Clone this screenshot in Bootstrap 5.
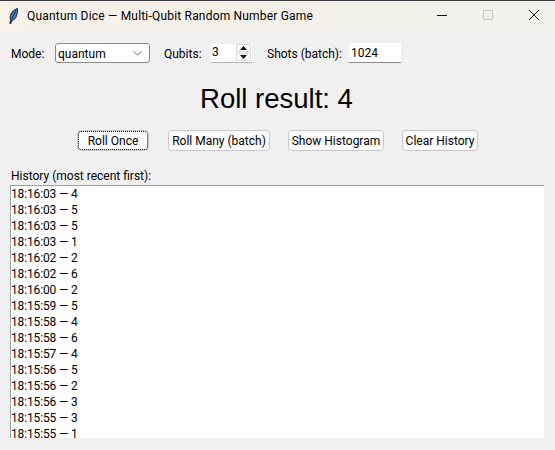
<!DOCTYPE html>
<html lang="en">
<head>
<meta charset="utf-8">
<title>Quantum Dice</title>
<link rel="stylesheet" href="https://cdn.jsdelivr.net/npm/bootstrap@5.3.0/dist/css/bootstrap.min.css">
<style>
html,body{height:450px;overflow:hidden}
body{width:555px;background:#f0f0f0;font-family:Roboto,"Noto Sans",sans-serif;font-size:12px;color:#000;line-height:16px}
.winbar{height:31px;background:linear-gradient(90deg,#f7f1e8,#f3f1ea 60%,#eff2ec);border-top:1px solid #3a3a3a;padding-left:9px}
.winbar-title{margin-left:9px;white-space:nowrap;letter-spacing:.19px}
.winbtn{width:46px;height:30px;padding-bottom:2px}
.winbtns{margin-right:-2px}
.ctl-row{height:20px;margin:12px 0 0 11px}
.lbl-mode{width:44px;padding-top:1px}
.lbl-qub{width:47px;padding-top:1px}
.lbl-shot{width:82px;padding-top:1px}
.sel-box{width:95px;height:20px;margin-right:14px;background:#fff;border:1px solid #8a8a8a;border-radius:3px;padding:1px 7px 0 2px}
.spin-box{width:41px;height:19px;margin-right:15px;background:#fff;border-bottom:1px solid #b5b5b5;padding-left:1px}
.spin-arrows{width:15px;height:17px;gap:1px;margin-right:1px}
.spin-arrows span{height:8px;background:#fbfbfb;border:1px solid #d4d4d4;border-radius:1px}
.ent-box{width:52px;height:20px;background:#fff;border-bottom:1px solid #8a8a8a;padding-left:2px;line-height:21px}
.result-txt{font-family:"Liberation Sans",Arial,sans-serif;font-size:27.5px;line-height:34px;margin:19px 0 0;font-weight:400;text-align:center;padding-right:2px}
.act-row{margin:14px 0 0 77px;height:21px}
.act{height:21px;font-size:12px;line-height:15px;padding:1px 0 0;background:#fdfdfd;border:1px solid #c8c8c8;border-radius:4px;color:#000;white-space:nowrap}
.act:hover{background:#fdfdfd;border-color:#c8c8c8;color:#000}
.act-a{width:72px;margin-right:19px;outline:1px dotted #000;outline-offset:-2px}
.act-b{width:102px;margin-right:18px}
.act-c{width:96px;margin-right:18px}
.act-d{width:76px}
.hist-label{margin:17px 0 0 11px;height:17px}
.hist-box{width:534px;height:253px;margin-left:10px;background:#fff;border-top:1px solid #a0a0a0;border-left:1px solid #a0a0a0;overflow:hidden}
.hist-box div{height:16px;line-height:16px;letter-spacing:-.15px}
</style>
</head>
<body>
<div class="winbar d-flex align-items-center">
  <svg width="9" height="16" viewBox="0 0 9 16"><path d="M8.500.500C5 1.500 2.500 4 1.500 7.500c-.5 2-.3 3.500 0 5L.8 15.500l1 .2.700-3C5.500 12.500 7.300 9.500 8 6c.4-2 .6-3.500.5-5.500z" fill="#3f7fc4" stroke="#14202c" stroke-width="1"/><path d="M7 2.500 2.500 11.500" stroke="#0c1824" stroke-width=".8" fill="none"/></svg>
  <span class="winbar-title">Quantum Dice — Multi-Qubit Random Number Game</span>
  <div class="winbtns d-flex ms-auto">
    <div class="winbtn d-flex align-items-center justify-content-center"><svg width="10" height="10"><path d="M0 5.500h10" stroke="#111" stroke-width="1"/></svg></div>
    <div class="winbtn d-flex align-items-center justify-content-center"><svg width="10" height="10"><rect x=".5" y=".5" width="9" height="9" rx="1" fill="none" stroke="#c4c4c4"/></svg></div>
    <div class="winbtn d-flex align-items-center justify-content-center"><svg width="10" height="10"><path d="M0 0l10 10M10 0L0 10" stroke="#111" stroke-width="1" fill="none"/></svg></div>
  </div>
</div>
<div class="ctl-row d-flex align-items-center">
  <span class="lbl-mode">Mode:</span>
  <div class="sel-box d-flex align-items-center justify-content-between"><span>quantum</span><svg width="9" height="5"><path d="M.5.500l4 3.500 4-3.500" fill="none" stroke="#666"/></svg></div>
  <span class="lbl-qub">Qubits:</span>
  <div class="spin-box d-flex align-items-start justify-content-between"><span>3</span>
    <div class="spin-arrows d-flex flex-column">
      <span class="d-flex align-items-center justify-content-center"><svg width="7" height="4"><path d="M3.500 0L7 4H0z" fill="#111"/></svg></span>
      <span class="d-flex align-items-center justify-content-center"><svg width="7" height="4"><path d="M3.500 4L7 0H0z" fill="#111"/></svg></span>
    </div>
  </div>
  <span class="lbl-shot">Shots (batch):</span>
  <div class="ent-box">1024</div>
</div>
<h1 class="result-txt">Roll result: 4</h1>
<div class="act-row d-flex">
  <button type="button" class="btn act act-a">Roll Once</button>
  <button type="button" class="btn act act-b">Roll Many (batch)</button>
  <button type="button" class="btn act act-c">Show Histogram</button>
  <button type="button" class="btn act act-d">Clear History</button>
</div>
<div class="hist-label">History (most recent first):</div>
<div class="hist-box"><div>18:16:03 — 4</div><div>18:16:03 — 5</div><div>18:16:03 — 5</div><div>18:16:03 — 1</div><div>18:16:02 — 2</div><div>18:16:02 — 6</div><div>18:16:00 — 2</div><div>18:15:59 — 5</div><div>18:15:58 — 4</div><div>18:15:58 — 6</div><div>18:15:57 — 4</div><div>18:15:56 — 5</div><div>18:15:56 — 2</div><div>18:15:56 — 3</div><div>18:15:55 — 3</div><div>18:15:55 — 1</div></div>
</body>
</html>
